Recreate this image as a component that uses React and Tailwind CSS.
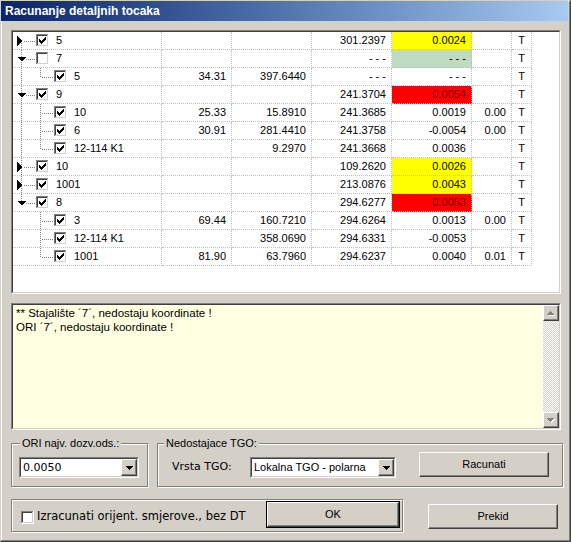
import React from 'react';

const sunkenOuter = 'border border-t-[#808080] border-l-[#808080] border-r-white border-b-white';
const sunkenInner = 'border border-t-[#404040] border-l-[#404040] border-r-[#d4d0c8] border-b-[#d4d0c8]';
const raised = 'border border-t-white border-l-white border-r-[#404040] border-b-[#404040] shadow-[inset_-1px_-1px_0_#808080]';
const etched = 'border border-[#808080] shadow-[inset_1px_1px_0_#fff,1px_1px_0_#fff]';
const verdana = "font-['DejaVu_Sans',Verdana,sans-serif]";

// lvl 0 = stajaliste, lvl 1 = detaljna tocka
const rows = [
    { lvl: 0, exp: 'c', chk: true, name: '5', c4: '301.2397', c5: '0.0024', bg: 'y' },
    { lvl: 0, exp: 'o', chk: false, name: '7', c4: '- - -', c5: '- - -', bg: 'g' },
    { lvl: 1, chk: true, name: '5', c2: '34.31', c3: '397.6440', c4: '- - -', c5: '- - -', last: true },
    { lvl: 0, exp: 'o', chk: true, name: '9', c4: '241.3704', c5: '0.0054', bg: 'r' },
    { lvl: 1, chk: true, name: '10', c2: '25.33', c3: '15.8910', c4: '241.3685', c5: '0.0019', c6: '0.00' },
    { lvl: 1, chk: true, name: '6', c2: '30.91', c3: '281.4410', c4: '241.3758', c5: '-0.0054', c6: '0.00' },
    { lvl: 1, chk: true, name: '12-114 K1', c3: '9.2970', c4: '241.3668', c5: '0.0036', last: true },
    { lvl: 0, exp: 'c', chk: true, name: '10', c4: '109.2620', c5: '0.0026', bg: 'y' },
    { lvl: 0, exp: 'c', chk: true, name: '1001', c4: '213.0876', c5: '0.0043', bg: 'y' },
    { lvl: 0, exp: 'o', chk: true, name: '8', c4: '294.6277', c5: '0.0053', bg: 'r' },
    { lvl: 1, chk: true, name: '3', c2: '69.44', c3: '160.7210', c4: '294.6264', c5: '0.0013', c6: '0.00' },
    { lvl: 1, chk: true, name: '12-114 K1', c3: '358.0690', c4: '294.6331', c5: '-0.0053' },
    { lvl: 1, chk: true, name: '1001', c2: '81.90', c3: '63.7960', c4: '294.6237', c5: '0.0040', c6: '0.01', last: true },
];

const lastTop = 9;

const cellBg = {
    y: 'bg-[#ffff00]',
    g: 'bg-[#c0dcc0]',
    r: 'bg-[#ff0000] text-[#700000]',
};

const CheckBox = ({ checked }) => {
    const ys = [5, 6, 7, 6, 5, 4, 3];
    return (
        <svg width="13" height="13" className="shrink-0" shapeRendering="crispEdges">
            <rect x="0" y="0" width="13" height="13" fill="#fff" />
            <rect x="0" y="0" width="12" height="1" fill="#808080" />
            <rect x="0" y="0" width="1" height="12" fill="#808080" />
            <rect x="1" y="1" width="10" height="1" fill="#404040" />
            <rect x="1" y="1" width="1" height="10" fill="#404040" />
            <rect x="1" y="11" width="11" height="1" fill="#d4d0c8" />
            <rect x="11" y="1" width="1" height="11" fill="#d4d0c8" />
            {checked && ys.map((y, i) => <rect key={i} x={3 + i} y={y} width="1" height="3" fill="#000" />)}
        </svg>
    );
};

const TreeLines = ({ row, i }) => {
    const dot = { stroke: '#808080', strokeDasharray: '1 1', strokeWidth: 1 };
    let v0 = null;
    if (i === 0) v0 = [9, 18];
    else if (i < lastTop) v0 = [0, 18];
    else if (i === lastTop) v0 = [0, 9];

    return (
        <svg width={row.lvl === 0 ? 23 : 41} height="18" className="shrink-0" shapeRendering="crispEdges">
            {v0 && <line x1="8.5" x2="8.5" y1={v0[0]} y2={v0[1]} {...dot} />}
            {row.lvl === 0 && row.exp === 'c' && (
                <>
                    <line x1="11" x2="23" y1="9.5" y2="9.5" {...dot} />
                    <polygon points="4,4 9,9 4,14" fill="#000" />
                </>
            )}
            {row.lvl === 0 && row.exp === 'o' && (
                <>
                    <line x1="13" x2="23" y1="9.5" y2="9.5" {...dot} />
                    <polygon points="4,7 13,7 8.5,11.5" fill="#000" />
                </>
            )}
            {row.lvl === 1 && (
                <>
                    <line x1="27.5" x2="27.5" y1="0" y2={row.last ? 9 : 18} {...dot} />
                    <line x1="29" x2="41" y1="9.5" y2="9.5" {...dot} />
                </>
            )}
        </svg>
    );
};

const Cell = ({ w, children, className = '' }) => (
    <div className={`${w} h-[18px] shrink-0 border-b border-r border-dotted border-[#c0c0c0] flex items-center justify-end pr-[5px] ${className}`}>
        {children}
    </div>
);

const DropArrow = () => (
    <div className={`w-[16px] h-full shrink-0 bg-[#d4d0c8] ${raised} flex items-center justify-center`}>
        <svg width="7" height="4" shapeRendering="crispEdges">
            <rect x="0" y="0" width="7" height="1" fill="#000" />
            <rect x="1" y="1" width="5" height="1" fill="#000" />
            <rect x="2" y="2" width="3" height="1" fill="#000" />
            <rect x="3" y="3" width="1" height="1" fill="#000" />
        </svg>
    </div>
);

const Combo = ({ value, w, font = '' }) => (
    <div className={`${w} h-[21px] bg-white ${sunkenOuter}`}>
        <div className={`h-full flex ${sunkenInner}`}>
            <span className={`flex-1 pl-[2px] leading-[17px] whitespace-nowrap overflow-hidden ${font}`}>{value}</span>
            <DropArrow />
        </div>
    </div>
);

const ScrollBtn = ({ up }) => {
    const rowsUp = [[3, 1], [2, 3], [1, 5], [0, 7]];
    const r = up ? rowsUp : [...rowsUp].reverse();
    return (
        <div className={`w-[16px] h-[16px] shrink-0 bg-[#d4d0c8] ${raised} flex items-center justify-center`}>
            <svg width="8" height="5" shapeRendering="crispEdges">
                {r.map(([x, w], i) => <rect key={'w' + i} x={x + 1} y={i + 1} width={w} height="1" fill="#fff" />)}
                {r.map(([x, w], i) => <rect key={'g' + i} x={x} y={i} width={w} height="1" fill="#808080" />)}
            </svg>
        </div>
    );
};

const Button = ({ label, className = '' }) => (
    <div className={`bg-[#d4d0c8] ${raised} flex items-center justify-center ${className}`}>
        {label}
    </div>
);

export default function App() {
    return (
        <div className="w-[571px] h-[542px] overflow-hidden bg-[#d4d0c8] border border-t-[#d4d0c8] border-l-[#d4d0c8] border-r-[#404040] border-b-[#404040] shadow-[inset_-1px_-1px_0_#808080,inset_1px_1px_0_#fff] font-['Liberation_Sans',Arial,sans-serif] text-[11px] text-black select-none">
            <div className="h-[20px] mr-[2px] flex items-center pl-[4px] bg-linear-to-r from-[#0a246a] to-[#a6caf0] text-white font-bold text-[12px]">
                Racunanje detaljnih tocaka
            </div>

            <div className="pl-[10px]">
                {/* tablica tocaka */}
                <div className={`mt-[9px] w-[550px] h-[264px] ${sunkenOuter}`}>
                    <div className={`h-full bg-white ${sunkenInner}`}>
                        {rows.map((row, i) => (
                            <div key={i} className="flex">
                                <div className="w-[149px] h-[18px] shrink-0 border-b border-r border-dotted border-[#c0c0c0] flex items-center">
                                    <TreeLines row={row} i={i} />
                                    <CheckBox checked={row.chk} />
                                    <span className="ml-[7px] whitespace-nowrap">{row.name}</span>
                                </div>
                                <Cell w="w-[70px]">{row.c2}</Cell>
                                <Cell w="w-[80px]">{row.c3}</Cell>
                                <Cell w="w-[80px]">{row.c4}</Cell>
                                <Cell w="w-[80px]" className={row.bg ? cellBg[row.bg] : ''}>{row.c5}</Cell>
                                <Cell w="w-[40px]">{row.c6}</Cell>
                                <Cell w="w-[20px]" className="!justify-center !pr-0">T</Cell>
                            </div>
                        ))}
                    </div>
                </div>

                {/* poruke */}
                <div className={`mt-[9px] w-[550px] h-[127px] ${sunkenOuter}`}>
                    <div className={`h-full flex ${sunkenInner}`}>
                        <div className="flex-1 bg-[#ffffe1] pl-[3px] pt-[1px] leading-[14px] text-[11.5px]">
                            <div>** Stajalište ´7´, nedostaju koordinate !</div>
                            <div>ORI ´7´, nedostaju koordinate !</div>
                        </div>
                        <div className="w-[16px] flex flex-col">
                            <ScrollBtn up />
                            <div className="flex-1 bg-[repeating-conic-gradient(#d4d0c8_0_25%,#fff_0_50%)] bg-[length:2px_2px]" />
                            <ScrollBtn />
                        </div>
                    </div>
                </div>

                <div className="mt-[7px] flex items-start">
                    <fieldset className={`w-[137px] h-[50px] ${etched}`}>
                        <legend className="ml-[8px] px-[2px] leading-[13px] bg-[#d4d0c8]">ORI najv. dozv.ods.:</legend>
                        <div className="mt-[7px] ml-[7px]">
                            <Combo value="0.0050" w="w-[120px]" font={verdana} />
                        </div>
                    </fieldset>

                    <fieldset className={`ml-[9px] w-[406px] h-[50px] ${etched}`}>
                        <legend className="ml-[6px] px-[2px] leading-[13px] bg-[#d4d0c8]">Nedostajace TGO:</legend>
                        <div className="flex items-start pl-[14px]">
                            <span className={`w-[78px] mt-[10px] leading-[13px] ${verdana}`}>Vrsta TGO:</span>
                            <div className="mt-[7px]">
                                <Combo value="Lokalna TGO - polarna" w="w-[146px]" />
                            </div>
                            <Button label="Racunati" className="ml-[23px] mt-[2px] w-[130px] h-[25px]" />
                        </div>
                    </fieldset>
                </div>

                <div className="mt-[12px] flex items-start">
                    <div className={`w-[392px] h-[33px] flex items-center ${etched}`}>
                        <div className="ml-[9px] mt-[3px]">
                            <CheckBox checked={false} />
                        </div>
                        <span className={`ml-[3px] mt-[3px] text-[11.5px] ${verdana}`}>Izracunati orijent. smjerove., bez DT</span>
                        <div className="ml-auto mr-[2px] mb-[2px] w-[134px] h-[27px] border border-black">
                            <Button label="OK" className="w-full h-full" />
                        </div>
                    </div>
                    <Button label="Prekid" className="ml-[25px] mt-[5px] w-[130px] h-[25px]" />
                </div>
            </div>
        </div>
    );
}
